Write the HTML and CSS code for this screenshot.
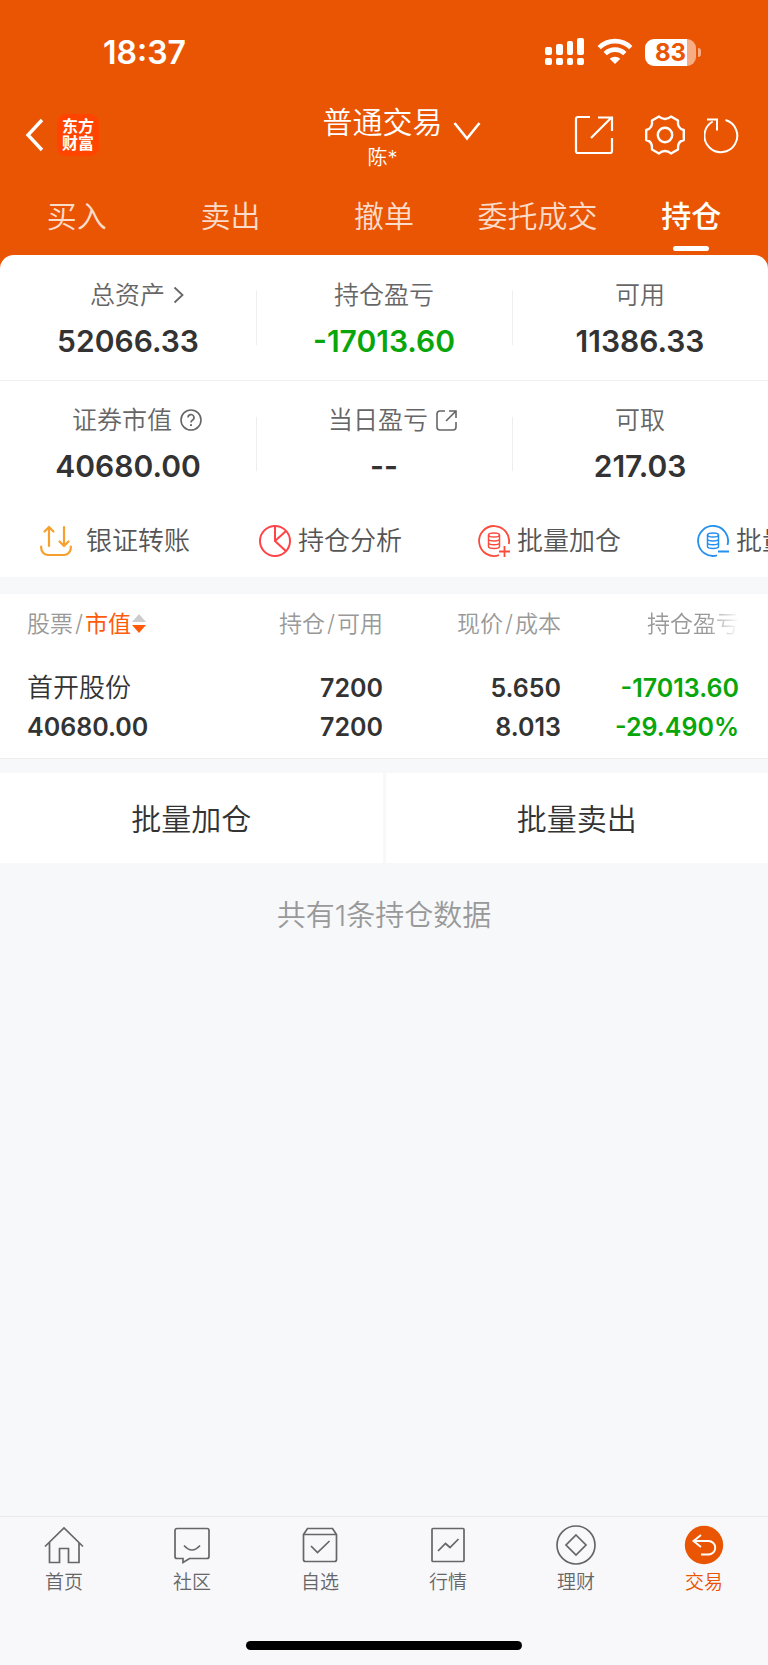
FILE: index.html
```
<!doctype html>
<html lang="zh-CN">

	<head>
		<meta charset="utf-8">
		<title>普通交易 - 持仓</title>
		<meta name="viewport" content="width=device-width, initial-scale=1.0">
		<link rel="stylesheet" href="styles.css">
	</head>

	<body>

		<header id="top">

			<!--	Phone status bar.	-->
			<div class="status">
				<span class="clock">18:37</span>
				<div class="statusIcons">
					<svg width="40" height="28" viewBox="0 0 40 28" fill="#fff">
						<rect x="0" y="9" width="7" height="8" rx="2"/>
						<rect x="11" y="6" width="7" height="11" rx="2"/>
						<rect x="22" y="3" width="6" height="14" rx="2"/>
						<rect x="32" y="0" width="7" height="17" rx="2"/>
						<rect x="0" y="20" width="7" height="7" rx="2"/>
						<rect x="11" y="20" width="7" height="7" rx="2"/>
						<rect x="22" y="20" width="6" height="7" rx="2"/>
						<rect x="32" y="20" width="7" height="7" rx="2"/>
					</svg>
					<svg width="36" height="28" viewBox="0 0 36 28" fill="none" stroke="#fff" stroke-width="4.6">
						<path d="M2.2 9.6a22.5 22.5 0 0 1 31.6 0"/>
						<path d="M8.2 15.6a14 14 0 0 1 19.6 0"/>
						<path d="M18 26l-5.3-5.2a7.8 7.8 0 0 1 10.6 0z" fill="#fff" stroke="none"/>
					</svg>
					<span class="battery">83</span>
				</div>
			</div>

			<div class="titleBar">
				<div class="titleLeft">
					<a href="#" aria-label="返回">
						<svg width="20" height="34" viewBox="0 0 20 34" fill="none" stroke="#fff" stroke-width="3.4"><path d="M17 2L3 17l14 15"/></svg>
					</a>
					<a href="#" class="logo">东方<br>财富</a>
				</div>
				<div class="account">
					<h1>
						<button class="accountButton">普通交易
							<svg width="28" height="20" viewBox="0 0 28 20" fill="none" stroke="#fff" stroke-width="2.6"><path d="M1.500 2L14 17.500L26.500 2"/></svg>
						</button>
					</h1>
					<p>陈*</p>
				</div>
				<div class="titleRight">
					<button aria-label="分享">
						<svg width="40" height="40" viewBox="0 0 40 40" fill="none" stroke="#fff" stroke-width="2.2">
							<path d="M16 2H4a2 2 0 0 0-2 2v32a2 2 0 0 0 2 2h32a2 2 0 0 0 2-2V23M24 2.500h14V16M38 2L17 23"/>
						</svg>
					</button>
					<button aria-label="设置">
						<svg width="40" height="40" viewBox="0 0 40 40" fill="none" stroke="#fff" stroke-width="2.4" stroke-linejoin="round">
							<path d="M14 1.500Q16.500 4 20 4T26 1.500L33 5.500Q32 13.500 38.800 15V25Q32 26.500 33 34.500L26 38.500Q23.500 36 20 36T14 38.500L7 34.500Q8 26.500 1.200 25V15Q8 13.500 7 5.500Z"/>
							<circle cx="20" cy="20" r="7.200"/>
						</svg>
					</button>
					<button aria-label="刷新">
						<svg width="36" height="38" viewBox="0 0 36 38" fill="none" stroke="#fff" stroke-width="2">
							<path d="M21.500 4a16.400 16.400 0 1 1-12.800 1.500"/>
							<path d="M3 3.500h10v11"/>
						</svg>
					</button>
				</div>
			</div>

			<nav class="tabs">
				<a href="#">买入</a>
				<a href="#">卖出</a>
				<a href="#">撤单</a>
				<a href="#">委托成交</a>
				<a href="#" class="current">持仓</a>
			</nav>

		</header>

		<main>

			<!--	Account figures.	-->
			<section class="assets">
				<div class="figure">
					<h2 class="hasIcon">总资产
						<svg width="11" height="18" viewBox="0 0 11 18" fill="none" stroke="#666" stroke-width="1.8"><path d="M1.500 1.500L9.500 9l-8 7.500"/></svg>
					</h2>
					<p>52066.33</p>
				</div>
				<div class="figure">
					<h2>持仓盈亏</h2>
					<p class="down">-17013.60</p>
				</div>
				<div class="figure">
					<h2>可用</h2>
					<p>11386.33</p>
				</div>
				<div class="figure">
					<h2 class="hasIcon">证券市值
						<svg width="22" height="22" viewBox="0 0 22 22" fill="none" stroke="#666" stroke-width="1.6">
							<circle cx="11" cy="11" r="10"/>
							<path d="M8 8.600a3 3 0 1 1 4.400 2.600Q11 12 11 13.600"/>
							<path d="M11 15.200v1.900" stroke-width="2"/>
						</svg>
					</h2>
					<p>40680.00</p>
				</div>
				<div class="figure">
					<h2 class="hasIcon">当日盈亏
						<svg width="22" height="22" viewBox="0 0 22 22" fill="none" stroke="#666" stroke-width="1.6">
							<path d="M9 2H4a3 3 0 0 0-3 3v13a3 3 0 0 0 3 3h13a3 3 0 0 0 3-3v-5M13 2h7v7M20 2L10 12"/>
						</svg>
					</h2>
					<p>--</p>
				</div>
				<div class="figure">
					<h2>可取</h2>
					<p>217.03</p>
				</div>
			</section>

			<!--	Shortcuts, these scroll sideways.	-->
			<section class="shortcuts">
				<button class="wide">
					<svg width="32" height="32" viewBox="0 0 32 32" fill="none" stroke="#f7a02d" stroke-width="2.200" stroke-linecap="round">
						<path d="M1.200 21.500v1.500a7 7 0 0 0 7 7h15.600a7 7 0 0 0 7-7v-1.500M9 21V2M4.500 6.500L9 2l4.500 4.500M24 2v19M19.500 16.500L24 21l4.500-4.500"/>
					</svg>
					银证转账
				</button>
				<button>
					<svg width="32" height="32" viewBox="0 0 32 32" fill="none" stroke="#ff4348" stroke-width="2">
						<circle cx="16" cy="16" r="15"/>
						<path d="M16 1v15l10.800 10M16 16L27 6"/>
					</svg>
					持仓分析
				</button>
				<button>
					<svg width="32" height="32" viewBox="0 0 32 32" fill="none" stroke="#fb4b3c" stroke-width="1.800">
						<path d="M21 30.200A15 15 0 1 1 30.800 19M26.500 21v11M21 26.500h11"/>
						<g stroke-width="1.500">
							<ellipse cx="16" cy="10" rx="5.500" ry="2"/>
							<path d="M10.500 10v11.500c0 2.600 11 2.600 11 0V10M10.500 14c0 2.600 11 2.600 11 0M10.500 17.800c0 2.600 11 2.600 11 0"/>
						</g>
					</svg>
					批量加仓
				</button>
				<button>
					<svg width="32" height="32" viewBox="0 0 32 32" fill="none" stroke="#2590ee" stroke-width="1.800">
						<path d="M20 30.400A15 15 0 1 1 30.500 20M21 26.500h11"/>
						<g stroke-width="1.500">
							<ellipse cx="16" cy="10" rx="5.500" ry="2"/>
							<path d="M10.500 10v11.500c0 2.600 11 2.600 11 0V10M10.500 14c0 2.600 11 2.600 11 0M10.500 17.800c0 2.600 11 2.600 11 0"/>
						</g>
					</svg>
					批量卖出
				</button>
			</section>

			<!--	The positions held.	-->
			<section class="holdings">
				<table>
					<thead>
						<tr>
							<th>股票<i>/</i><b>市值</b><svg width="14" height="20" viewBox="0 0 14 20"><path d="M7 0l7 8H0z" fill="#ccc"/><path d="M0 11h14l-7 8z" fill="#ff5b0a"/></svg></th>
							<th>持仓<i>/</i>可用</th>
							<th>现价<i>/</i>成本</th>
							<th class="fade">持仓盈亏</th>
						</tr>
					</thead>
					<tbody>
						<tr>
							<td><span class="stock">首开股份</span><br>40680.00</td>
							<td>7200<br>7200</td>
							<td>5.650<br>8.013</td>
							<td class="down">-17013.60<br>-29.490%</td>
						</tr>
					</tbody>
				</table>
			</section>

			<div class="batch">
				<button>批量加仓</button>
				<button>批量卖出</button>
			</div>

			<p class="total">共有1条持仓数据</p>

		</main>

		<footer>
			<nav class="bottomNav">
				<a href="#">
					<svg width="40" height="40" viewBox="0 0 40 40" fill="none" stroke="#666" stroke-width="1.700">
						<path d="M1 21.500L20 3l19 18.500M5.500 17.500V37.500H15.500V23.500H24.500V37.500H35V17.500"/>
					</svg>
					首页
				</a>
				<a href="#">
					<svg width="40" height="40" viewBox="0 0 40 40" fill="none" stroke="#666" stroke-width="1.700">
						<path d="M5 3.500h30a2 2 0 0 1 2 2v26a2 2 0 0 1-2 2H17.500l-6.500 4v-4H5a2 2 0 0 1-2-2v-26a2 2 0 0 1 2-2z"/>
						<path d="M12 20.500q8 9 16 0"/>
					</svg>
					社区
				</a>
				<a href="#">
					<svg width="40" height="40" viewBox="0 0 40 40" fill="none" stroke="#666" stroke-width="1.700">
						<path d="M3.500 9.500l4-6h25l4 6v25a2 2 0 0 1-2 2h-29a2 2 0 0 1-2-2zM3.500 9.500h33"/>
						<path d="M11 21l6.500 6.500L29.500 16"/>
					</svg>
					自选
				</a>
				<a href="#">
					<svg width="40" height="40" viewBox="0 0 40 40" fill="none" stroke="#666" stroke-width="1.700">
						<rect x="4" y="3.500" width="32" height="33" rx="1"/>
						<path d="M10 26l7.500-7.500 4.500 4 8.500-8.500"/>
					</svg>
					行情
				</a>
				<a href="#">
					<svg width="40" height="40" viewBox="0 0 40 40" fill="none" stroke="#666" stroke-width="1.700">
						<circle cx="20" cy="20" r="19"/>
						<path d="M20 10l10 10-10 10-10-10z"/>
					</svg>
					理财
				</a>
				<a href="#" class="current">
					<svg width="40" height="40" viewBox="0 0 40 40" fill="none" stroke="#fff" stroke-width="1.900">
						<circle cx="20" cy="20" r="19.200" fill="#ea5504" stroke="none"/>
						<path d="M17 10l-7.500 6 7.500 6M9.500 16h15a6.700 6.700 0 0 1 0 13.500H17"/>
					</svg>
					交易
				</a>
			</nav>
			<div class="homeBar"></div>
		</footer>

	</body>

</html>
```
FILE: styles.css
```
* {
	box-sizing: border-box;
}

body {
	display: flex;
	flex-direction: column;
	min-height: 100vh;
	margin: 0;
	font-family: "Inter", "Noto Sans CJK SC", sans-serif;
	font-weight: 350;
	color: #333;
	background-color: #f7f8fa;
}

h1, h2, p {
	margin: 0;
	font-weight: inherit;
}

a {
	color: inherit;
	text-decoration: none;
}

button {
	padding: 0;
	border: 0;
	background: none;
	font: inherit;
	color: inherit;
}

svg {
	display: block;
	flex: none;
}

#top {
	padding-bottom: 16px;
	margin-bottom: -16px;
	background-color: #ea5504;
	color: #fff;
}

.status {
	display: flex;
	justify-content: space-between;
	align-items: center;
	height: 104px;
	padding: 0 67px 0 103px;
}

.clock {
	font-size: 32px;
	font-weight: 600;
}

.statusIcons {
	display: flex;
	gap: 12px;
	align-items: center;
}

.battery {
	position: relative;
	width: 51px;
	margin-right: 5px;
	border-radius: 9px;
	background: linear-gradient(to right, #fff 42px, #f6ad86 42px);
	color: #ea5504;
	font-size: 24px;
	font-weight: 700;
	line-height: 27px;
	text-align: center;
}

/* the little tip of the battery */
.battery::after {
	content: "";
	position: absolute;
	top: 9px;
	right: -5px;
	width: 3px;
	height: 9px;
	border-radius: 0 4px 4px 0;
	background-color: #f6ad86;
}

.titleBar {
	display: grid;
	grid-template-columns: 1fr auto 1fr;
	height: 78px;
	padding: 0 28px 0 25px;
}

.titleLeft, .titleRight {
	display: flex;
	align-items: center;
	height: 62px;
}

.titleLeft {
	gap: 12px;
}

.titleRight {
	justify-content: flex-end;
}

.titleRight button + button {
	margin-left: 19px;
}

.titleRight button:first-child {
	margin-right: 12px;
}

.logo {
	width: 42px;
	height: 42px;
	padding-top: 4px;
	border-radius: 9px;
	background-color: #ff4400;
	font-size: 16px;
	font-weight: 700;
	line-height: 17px;
	text-align: center;
}

.account {
	text-align: center;
}

.accountButton {
	position: relative;
	display: block;
	font-size: 30px;
	line-height: 36px;
}

/* hangs off the title so the title stays centred */
.accountButton svg {
	position: absolute;
	left: 100%;
	top: 17px;
	margin-left: 10px;
}

.account p {
	font-size: 20px;
	line-height: 36px;
}

.tabs {
	display: flex;
	height: 73px;
}

.tabs a {
	position: relative;
	flex: 1;
	color: #fbdccb;
	font-size: 30px;
	line-height: 68px;
	text-align: center;
}

.tabs .current {
	color: #fff;
	font-weight: 500;
}

.tabs .current::after {
	content: "";
	position: absolute;
	left: 50%;
	bottom: 4px;
	width: 36px;
	height: 5px;
	margin-left: -18px;
	border-radius: 3px;
	background-color: #fff;
}

main {
	flex: 1;
}

.assets {
	display: grid;
	grid-template-columns: repeat(3, 1fr);
	border-radius: 14px 14px 0 0;
	background-color: #fff;
}

.figure {
	position: relative;
	height: 125px;
	padding-top: 22px;
	text-align: center;
}

.figure:nth-child(n+4) {
	padding-top: 21px;
	border-top: 1px solid #f0f0f2;
}

.figure:not(:nth-child(3n))::after {
	content: "";
	position: absolute;
	top: 36px;
	right: -1px;
	width: 1px;
	height: 54px;
	background-color: #eeeef0;
}

.figure h2 {
	display: flex;
	justify-content: center;
	align-items: center;
	gap: 8px;
	color: #666;
	font-size: 25px;
	line-height: 36px;
}

.figure h2.hasIcon {
	padding-left: 18px;
}

.figure p {
	padding-top: 10px;
	font-size: 30px;
	font-weight: 600;
	line-height: 36px;
}

.figure .down, td.down {
	color: #08a60a;
}

.shortcuts {
	display: flex;
	height: 72px;
	padding-left: 40px;
	background-color: #fff;
	overflow-x: auto;
	scrollbar-width: none;
}

.shortcuts button {
	display: flex;
	flex: none;
	align-items: center;
	gap: 7px;
	width: 219px;
	color: #555;
	font-size: 26px;
	line-height: 36px;
	white-space: nowrap;
}

.shortcuts .wide {
	gap: 14px;
}

.holdings {
	margin-top: 17px;
	padding: 0 29px 0 27px;
	border-bottom: 1px solid #eeeeee;
	background-color: #fff;
}

.holdings table {
	width: 100%;
	table-layout: fixed;
	border-collapse: collapse;
}

.holdings th, .holdings td {
	padding: 0;
	text-align: right;
	white-space: nowrap;
}

.holdings th:first-child, .holdings td:first-child {
	text-align: left;
}

.holdings th {
	height: 60px;
	color: #999;
	font-size: 23px;
	font-weight: 350;
	line-height: 60px;
}

.holdings th i {
	margin: 0 2px;
	font-style: normal;
}

.holdings th b {
	color: #ff5b0a;
	font-weight: 400;
}

.holdings th svg {
	display: inline-block;
	margin-left: 1px;
	vertical-align: -2px;
}

.holdings th.fade {
	-webkit-mask-image: linear-gradient(to left, transparent, #000 32px);
	mask-image: linear-gradient(to left, transparent, #000 32px);
}

.holdings td {
	padding: 14px 0 11px;
	font-size: 25px;
	font-weight: 600;
	line-height: 39px;
}

.stock {
	font-size: 26px;
	font-weight: 350;
}

.batch {
	display: flex;
	gap: 3px;
	margin-top: 14px;
}

.batch button {
	flex: 1;
	height: 90px;
	padding-bottom: 2px;
	background-color: #fff;
	font-size: 30px;
}

.total {
	padding-top: 31px;
	color: #999;
	font-size: 29px;
	line-height: 44px;
	text-align: center;
}

footer {
	padding-bottom: 15px;
	border-top: 1px solid #e9eaec;
	background-color: #f8f8fb;
}

.bottomNav {
	display: flex;
	height: 124px;
	padding-top: 8px;
}

.bottomNav a {
	display: flex;
	flex: 1;
	flex-direction: column;
	align-items: center;
	gap: 4px;
	color: #666;
	font-size: 19px;
	line-height: 28px;
}

.bottomNav .current {
	color: #ea5504;
}

.homeBar {
	width: 36%;
	height: 9px;
	margin: 0 auto;
	border-radius: 5px;
	background-color: #000;
}
```
